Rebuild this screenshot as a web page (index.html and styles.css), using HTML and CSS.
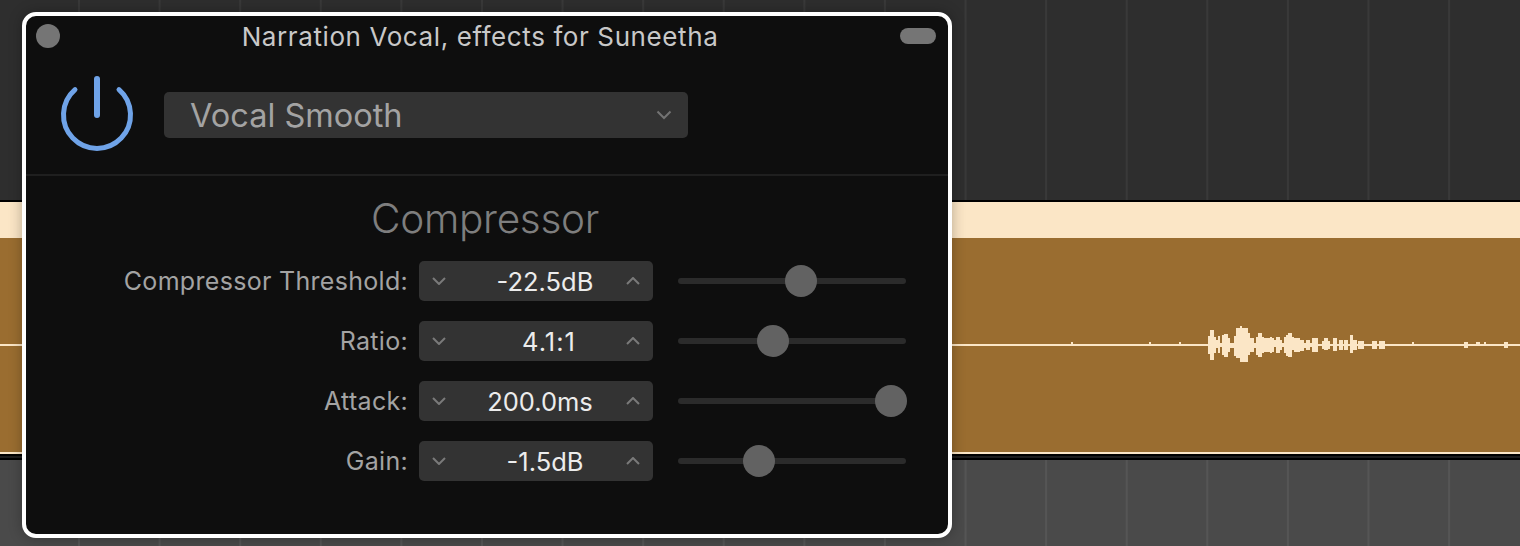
FILE: index.html
```html
<!DOCTYPE html>
<html lang="en">
<head>
<meta charset="utf-8">
<title>Narration Vocal, effects for Suneetha</title>
<link rel="stylesheet" href="styles.css">
</head>
<body>
<div class="arrange">
  <div class="track track-top"></div>
  <div class="region">
    <div class="region-head"></div>
    <div class="region-body">
      <svg class="wave" viewBox="0 238 1520 214" width="1520" height="214" aria-hidden="true">
        <rect x="0" y="344" width="1520" height="2"/>
        <path d="M1071 342h2v4h-2zM1149 342h2v4h-2zM1179 342h2v4h-2zM1208 336h2v18h-2zM1210 330h4v30h-4zM1214 337h2v16h-2zM1216 340h2v8h-2zM1218 336h2v17h-2zM1220 343h2v4h-2zM1222 335h2v20h-2zM1224 334h4v23h-4zM1228 338h2v14h-2zM1230 343h4v5h-4zM1234 336h2v20h-2zM1236 328h4v30h-4zM1240 326h2v36h-2zM1242 328h6v34h-6zM1248 333h2v22h-2zM1250 338h4v14h-4zM1254 343h2v5h-2zM1256 337h2v18h-2zM1258 333h4v24h-4zM1262 337h2v16h-2zM1264 338h6v14h-6zM1270 337h2v16h-2zM1272 338h2v14h-2zM1274 340h2v7h-2zM1276 337h4v16h-4zM1280 340h2v10h-2zM1282 343h2v4h-2zM1284 337h2v16h-2zM1286 335h2v21h-2zM1288 333h4v24h-4zM1292 337h2v13h-2zM1294 338h6v14h-6zM1300 340h4v11h-4zM1304 343h2v5h-2zM1306 340h4v10h-4zM1310 343h2v4h-2zM1312 338h6v14h-6zM1322 341h2v8h-2zM1324 338h4v12h-4zM1328 341h2v8h-2zM1333 338h4v13h-4zM1339 340h4v10h-4zM1344 340h4v10h-4zM1350 335h3v18h-3zM1353 340h4v10h-4zM1358 341h6v8h-6zM1372 341h5v8h-5zM1379 341h6v8h-6zM1412 342h2v4h-2zM1464 342h4v6h-4zM1476 342h4v3h-4zM1484 342h2v4h-2zM1504 342h4v6h-4z"/>
      </svg>
    </div>
    <div class="region-foot"></div>
  </div>
  <div class="rules"><span class="rule-dim"></span></div>
  <div class="track track-bottom"></div>
</div>

<section class="popup">
  <header class="titlebar">
    <span class="close-dot"></span>
    <h1 class="title">Narration Vocal, effects for Suneetha</h1>
    <span class="pill"></span>
  </header>

  <div class="controls">
    <svg class="power" viewBox="0 0 78 78" width="78" height="78" aria-hidden="true">
      <path class="power-arc" d="M17 13.7A33.5 33.5 0 1 0 61 13.7"/>
      <path class="power-bar" d="M39 3V39"/>
    </svg>
    <div class="preset">
      <span class="preset-name">Vocal Smooth</span>
      <svg class="chev-preset" viewBox="0 0 16 10" width="16" height="10" aria-hidden="true"><path d="M1.5 1.5 8 8l6.5-6.5"/></svg>
    </div>
  </div>

  <div class="divider"></div>

  <h2 class="section">Compressor</h2>

  <div class="params">
    <span class="param-label">Compressor Threshold:</span>
    <div class="stepper">
      <svg class="chev" viewBox="0 0 14 8" width="14" height="8" aria-hidden="true"><path d="M1 1l6 6 6-6"/></svg>
      <span class="value">-22.5dB</span>
      <svg class="chev" viewBox="0 0 14 8" width="14" height="8" aria-hidden="true"><path d="M1 7l6-6 6 6"/></svg>
    </div>
    <div class="slider"><span class="thumb" style="left:107px"></span></div>

    <span class="param-label">Ratio:</span>
    <div class="stepper">
      <svg class="chev" viewBox="0 0 14 8" width="14" height="8" aria-hidden="true"><path d="M1 1l6 6 6-6"/></svg>
      <span class="value value-short">4.1:1</span>
      <svg class="chev" viewBox="0 0 14 8" width="14" height="8" aria-hidden="true"><path d="M1 7l6-6 6 6"/></svg>
    </div>
    <div class="slider"><span class="thumb" style="left:79px"></span></div>

    <span class="param-label">Attack:</span>
    <div class="stepper">
      <svg class="chev" viewBox="0 0 14 8" width="14" height="8" aria-hidden="true"><path d="M1 1l6 6 6-6"/></svg>
      <span class="value value-long">200.0ms</span>
      <svg class="chev" viewBox="0 0 14 8" width="14" height="8" aria-hidden="true"><path d="M1 7l6-6 6 6"/></svg>
    </div>
    <div class="slider"><span class="thumb" style="left:197px"></span></div>

    <span class="param-label">Gain:</span>
    <div class="stepper">
      <svg class="chev" viewBox="0 0 14 8" width="14" height="8" aria-hidden="true"><path d="M1 1l6 6 6-6"/></svg>
      <span class="value">-1.5dB</span>
      <svg class="chev" viewBox="0 0 14 8" width="14" height="8" aria-hidden="true"><path d="M1 7l6-6 6 6"/></svg>
    </div>
    <div class="slider"><span class="thumb" style="left:65px"></span></div>
  </div>
</section>
</body>
</html>
```
FILE: styles.css
```css
* { box-sizing: border-box; }

html, body {
  margin: 0;
  height: 546px;
  overflow: hidden;
  background: #4a4a4a;
  font-family: Inter, "Liberation Sans", sans-serif;
}

.arrange {
  display: flex;
  flex-direction: column;
  height: 546px;
}

.track {
  background-repeat: repeat-x;
  background-size: 80.6px 100%;
  background-position: 78px 0;
}

.track-top {
  height: 200px;
  background-color: #2e2e2e;
  background-image: linear-gradient(90deg, #393939 2px, transparent 2px);
}

.region {
  border-top: 2px solid #000;
}

.region-head {
  height: 36px;
  background: #fbe6c6;
}

.region-body {
  height: 214px;
  background: #9a6d30;
}

.wave {
  display: block;
  fill: #fbe6c6;
  shape-rendering: crispEdges;
}

.region-foot {
  height: 2px;
  background: #fbe6c6;
}

.rules {
  height: 6px;
  background: #000;
  padding-top: 2px;
}

.rule-dim {
  display: block;
  height: 2px;
  background: #1c1c1c;
}

.track-bottom {
  flex: 1;
  background-color: #4a4a4a;
  background-image: linear-gradient(90deg, #555 2px, transparent 2px);
}

.popup {
  position: absolute;
  left: 22px;
  top: 12px;
  width: 930px;
  height: 526px;
  background: #0e0e0e;
  border: 4px solid #fff;
  border-radius: 14px;
  box-shadow: 0 0 14px rgba(0, 0, 0, .28);
}

.titlebar {
  display: flex;
  align-items: center;
  justify-content: space-between;
  height: 40px;
  padding: 0 12px 0 10px;
}

.close-dot {
  width: 24px;
  height: 24px;
  border-radius: 50%;
  background: #757575;
}

.pill {
  width: 36px;
  height: 16px;
  border-radius: 8px;
  background: #757575;
}

.title {
  margin: 0;
  font-size: 26px;
  font-weight: 400;
  letter-spacing: .6px;
  color: #c8c8c8;
  white-space: nowrap;
}

.controls {
  display: flex;
  align-items: center;
  gap: 28px;
  height: 78px;
  margin-top: 20px;
  padding-left: 32px;
}

.power {
  display: block;
  flex: none;
}

.power-arc, .power-bar {
  fill: none;
  stroke: #6fa3e8;
  stroke-linecap: round;
}

.power-arc { stroke-width: 5px; }
.power-bar { stroke-width: 6px; }

.preset {
  display: flex;
  align-items: center;
  justify-content: space-between;
  width: 524px;
  height: 46px;
  padding: 0 16px 0 26px;
  border-radius: 5px;
  background: #333;
}

.preset-name {
  font-size: 32.5px;
  color: #a3a3a3;
}

.chev-preset {
  fill: none;
  stroke: #737373;
  stroke-width: 2px;
}

.divider {
  height: 2px;
  margin-top: 20px;
  background: #1f1f1f;
}

.section {
  margin: 0;
  height: 85px;
  padding-top: 18px;
  padding-right: 4px;
  text-align: center;
  font-size: 40.5px;
  line-height: 50px;
  letter-spacing: -.3px;
  font-weight: 300;
  color: #7e7e7e;
}

.params {
  display: grid;
  grid-template-columns: 382px 245px 253px;
  grid-auto-rows: 40px;
  row-gap: 20px;
  align-items: center;
}

.param-label {
  text-align: right;
  font-size: 25px;
  letter-spacing: .3px;
  color: #a3a3a3;
  white-space: nowrap;
}

.stepper {
  display: flex;
  align-items: center;
  justify-content: space-between;
  height: 40px;
  margin-left: 11px;
  padding: 0 13px;
  border-radius: 5px;
  background: #333;
}

.value {
  flex: 1;
  padding-left: 18px;
  text-align: center;
  font-size: 25.5px;
  color: #ececec;
}

.value-short {
  padding-left: 26px;
  letter-spacing: 1px;
}

.value-long {
  padding-left: 8px;
}

.chev {
  flex: none;
  fill: none;
  stroke: #7a7a7a;
  stroke-width: 2px;
}

.slider {
  position: relative;
  height: 6px;
  width: 228px;
  margin-left: 25px;
  border-radius: 3px;
  background: #2b2b2b;
}

.thumb {
  position: absolute;
  top: -13px;
  width: 32px;
  height: 32px;
  border-radius: 50%;
  background: #626262;
}
```
